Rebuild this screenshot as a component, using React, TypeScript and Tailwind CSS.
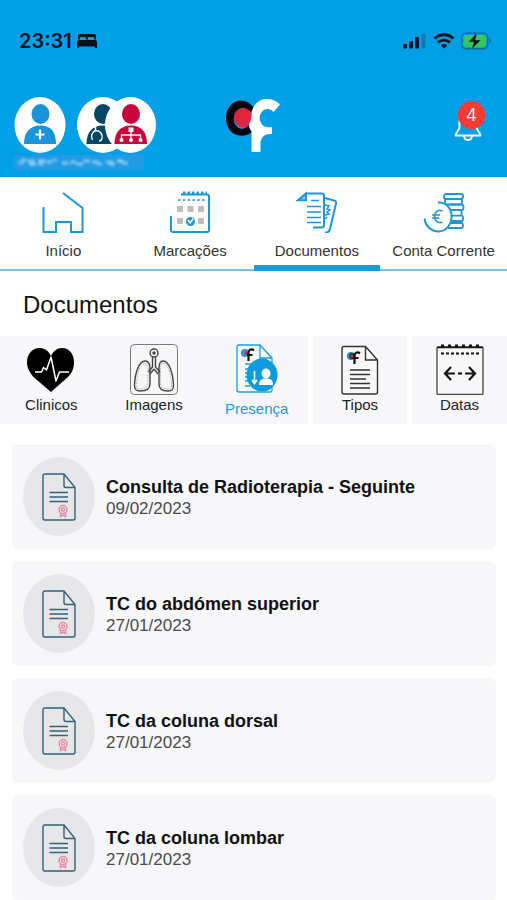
import clsx from "clsx";
import type { ReactNode } from "react";
import { useState } from "react";

// ── Data ──────────────────────────────────────────────

const DOCUMENTS = [
  { title: "Consulta de Radioterapia - Seguinte", date: "09/02/2023" },
  { title: "TC do abdómen superior", date: "27/01/2023" },
  { title: "TC da coluna dorsal", date: "27/01/2023" },
  { title: "TC da coluna lombar", date: "27/01/2023" },
];

/** Lit cells of the masked patient name: x, y, width, opacity. */
const MASK_CELLS = [
  [4, 6, 6, 0.4], [7, 3, 5, 0.5], [13, 4, 8, 0.5], [15, 7, 7, 0.6],
  [24, 4, 7, 0.6], [24, 7, 6, 0.5], [32, 5, 6, 0.5], [38, 3, 5, 0.4],
  [48, 6, 6, 0.5], [56, 5, 6, 0.5], [62, 7, 7, 0.5], [69, 4, 7, 0.5],
  [78, 5, 6, 0.5], [83, 7, 5, 0.5], [92, 5, 7, 0.5], [95, 7, 6, 0.5],
  [103, 4, 6, 0.6], [108, 6, 6, 0.5],
];

// ── Status bar icons ──────────────────────────────────

function BedIcon() {
  return (
    <svg width="22" height="16" viewBox="0 0 22 16" fill="#05131c">
      <path d="M2 6.500V3a2 2 0 0 1 2-2h14a2 2 0 0 1 2 2v3.500h-2V5a1 1 0 0 0-1-1h-4a1 1 0 0 0-1 1v1.500h-2V5a1 1 0 0 0-1-1H5a1 1 0 0 0-1 1v1.500z" />
      <path d="M3 7h16a2 2 0 0 1 2 2v6h-2v-1.500H3V15H1V9a2 2 0 0 1 2-2z" />
    </svg>
  );
}

function SignalIcon() {
  return (
    <svg width="24" height="16" viewBox="0 0 24 16" fill="#05131c">
      <rect x="0" y="11" width="4" height="4.500" rx="1" />
      <rect x="6" y="8" width="4" height="7.500" rx="1" />
      <rect x="12" y="4" width="4" height="11.500" rx="1" />
      <rect x="18.500" y="0.500" width="4" height="15" rx="1" opacity="0.250" />
    </svg>
  );
}

function WifiIcon() {
  return (
    <svg width="22" height="16" viewBox="0 0 22 16" fill="none" stroke="#05131c" strokeWidth="2.800">
      <path d="M1.500 5.600a13.600 13.600 0 0 1 19 0" />
      <path d="M5 9.600a8.600 8.600 0 0 1 12 0" />
      <path d="M11 15.600 7.800 12.400a4.600 4.600 0 0 1 6.400 0z" fill="#05131c" stroke="none" />
    </svg>
  );
}

function BatteryIcon() {
  return (
    <svg width="32" height="18" viewBox="0 0 32 18">
      <rect x="0.700" y="1.200" width="26" height="15.600" rx="4" fill="none" stroke="#0a6f9c" strokeWidth="1.400" />
      <rect x="2.500" y="3" width="22.500" height="12" rx="2.400" fill="#35c85f" />
      <path d="M28.500 6.500c2 .6 2 4.400 0 5z" fill="#0a6f9c" />
      <path d="M16 .5 7.500 10h5.200L10.500 17.500 20 8h-5.400z" fill="#05131c" stroke="#35c85f" strokeWidth="0.500" />
    </svg>
  );
}

// ── Header icons ──────────────────────────────────────

function PatientIcon() {
  return (
    <svg width="52" height="56" viewBox="0 0 52 56">
      <ellipse cx="26" cy="28" rx="25.500" ry="28" fill="#fff" />
      <ellipse cx="26.500" cy="17" rx="9" ry="10" fill="#1a94d8" />
      <path d="M10 47c0-12 6-18.500 16.500-18.500S42 35 42 47z" fill="#1a94d8" />
      <path d="M26 32.500v10M21.500 37.500h9" stroke="#fff" strokeWidth="2.200" />
    </svg>
  );
}

function CareTeamIcon() {
  return (
    <svg width="80" height="56" viewBox="0 0 80 56">
      <ellipse cx="26" cy="28" rx="26" ry="28" fill="#fff" />
      <ellipse cx="26" cy="17" rx="9" ry="10" fill="#074564" />
      <path d="M9.500 47c0-12 6-18.500 16.500-18.500S42.500 35 42.500 47z" fill="#074564" />
      <path
        d="M18.500 29v4.500c-4 2-5 6-3 9.500M18.500 33.500c5 0 7.500 4 6.500 8-.500 2-1.500 2.500-3 2.500M29 29c0 4 3 6 2 9"
        fill="none"
        stroke="#fff"
        strokeWidth="1.400"
      />
      <ellipse cx="53.500" cy="28" rx="25.500" ry="28" fill="#fff" />
      <ellipse cx="54" cy="17" rx="9" ry="10" fill="#c8053c" />
      <path d="M37.500 47c0-12 6-18.500 16.500-18.500S70 35 70 47z" fill="#c8053c" />
      <path d="M54 32v11M44.500 42v-4h19v4" fill="none" stroke="#fff" strokeWidth="1.300" />
      <rect x="51.500" y="30.500" width="5" height="4.500" fill="#fff" />
      <circle cx="44.500" cy="43" r="2" fill="#fff" />
      <circle cx="54" cy="43" r="2" fill="#fff" />
      <circle cx="63.500" cy="43" r="2" fill="#fff" />
    </svg>
  );
}

function NameMask() {
  return (
    <svg width="130" height="15" viewBox="0 0 130 15">
      <rect width="130" height="15" fill="#229be5" />
      <g fill="#b9dffa" className="blur-[1px]">
        {MASK_CELLS.map(([x, y, w, o]) => (
          <rect key={`${x}-${y}`} x={x} y={y} width={w} height="4" opacity={o} />
        ))}
      </g>
    </svg>
  );
}

function ClinicLogo() {
  return (
    <svg width="56" height="54" viewBox="0 0 56 54">
      <path
        d="M28 9.500C24 2.500 16 0 10 2.500 3 5.500 0 12 0 19c0 8 4 15 11 17 6.500 2 13 0 17.500-5.500L23 26c-3 4-8 5-11.500 2-5-4-5-12 0-16 4-3 8-2 11.500 2.500z"
        fill="#030608"
      />
      <ellipse cx="17" cy="18.500" rx="9" ry="9.800" fill="#e0263f" />
      <path
        d="M25.500 53V32c-2-2-3-5-2-8 1.500-3 2-5 2-8C26 6 33 0 40 0c6 0 11 2 14 5.500L47.500 13c-2.500-3-6.500-4-9.500-2-4 2.500-5.500 7.500-3.500 12 2 4.500 5.500 6 11.500 5v7h-2c-6 0-9.500 4-9.500 10V53z"
        fill="#fff"
      />
    </svg>
  );
}

function BellIcon() {
  return (
    <svg width="28" height="32" viewBox="0 0 28 32" fill="none" stroke="#fff" strokeWidth="2" strokeLinejoin="round">
      <path d="M14 3c-6 0-8.500 4.500-8.500 10v5c0 3-3 4.500-4 8.500h25c-1-4-4-5.500-4-8.500v-5C22.500 7.500 20 3 14 3z" />
      <path d="M10 27c.500 5.300 7.500 5.300 8 0" />
    </svg>
  );
}

// ── Navigation icons ──────────────────────────────────

function HomeIcon() {
  return (
    <svg width="42" height="42" viewBox="0 0 42 42" fill="none" stroke="#1d97d7" strokeWidth="2">
      <path d="M1.500 16v25H14V31h15v10h11.500V17L21 2" />
    </svg>
  );
}

function CalendarIcon() {
  return (
    <svg width="42" height="42" viewBox="0 0 42 42" fill="none" stroke="#1d97d7" strokeWidth="2">
      <path d="M12 3.500h26q2 0 2 2V39q0 2-2 2H4q-2 0-2-2V25" />
      <path d="M14 2h24" strokeWidth="3" strokeDasharray="2.500 2" />
      <path d="M9 9h27" strokeWidth="1.500" strokeDasharray="2.500 2.300" />
      <g fill="#bdbdbd" stroke="none">
        <rect x="8" y="15" width="6" height="6" rx="1" />
        <rect x="18.500" y="15" width="6" height="6" rx="1" />
        <rect x="29" y="15" width="6" height="6" rx="1" />
        <rect x="8" y="27" width="6" height="6" rx="1" />
        <rect x="29" y="27" width="6" height="6" rx="1" />
      </g>
      <circle cx="21.500" cy="30.500" r="4.500" fill="#1d97d7" stroke="none" />
      <path d="m19 29 2.200 3 3-4.500" stroke="#fff" strokeWidth="1.500" />
    </svg>
  );
}

function DocumentsIcon() {
  return (
    <svg width="42" height="42" viewBox="0 0 42 42" fill="none" stroke="#1d97d7" strokeWidth="2">
      <path d="M10 2.500h16q2 0 2 2V34q0 2.500-2.500 2.500H17" />
      <path d="M10 2.500v6.700H2z" fill="#1d97d7" fillOpacity="0.500" />
      <path d="M15 9.500h8M11 15.500h14M11 21h14M11 26.500h14M11 31.500h14" strokeWidth="1.600" />
      <path d="m29 7 9 2.500q2.500.500 2 3L34 38q-1 4-5 3.500" />
      <path d="m29 14 4 1-2 3 3 1-3 2 2 2-4 1M29 28l2-2" strokeWidth="1.500" />
    </svg>
  );
}

function CoinsIcon() {
  return (
    <svg width="42" height="42" viewBox="0 0 42 42" fill="none" stroke="#1d97d7" strokeWidth="1.800">
      <rect x="21" y="3" width="19" height="5" rx="2" />
      <rect x="22" y="8" width="17" height="5.500" rx="1.500" />
      <path d="M26 13.500h13q1.500 0 1.500 2.800T39 19H28M28 19h10.500v5.700H29M29 24.700h9.500q1.500 0 1.500 2.800T38.500 30H29M29 30h8.500v2H28M28 32h10.500q1.500 0 1.500 2.500T38.500 37H25" />
      <path d="M15 11.500c8-.500 13.500 5.500 13.500 14S23 40.500 15.500 40.500 2.500 35 1.500 27.500" strokeWidth="2" />
      <path d="M19.500 20c-4.500-2-8 1-8 5.500s3.500 7.500 8 5.500M9 24h8M9 27h7.500" strokeWidth="1.500" />
    </svg>
  );
}

// ── Filter icons ──────────────────────────────────────

function HeartIcon() {
  return (
    <svg width="48" height="51" viewBox="0 0 48 51">
      <path
        d="M24 12C21 6 17 4 12.500 4 5.500 4 0 10 0 18c0 6 2.500 10 6.500 15L24 48l17-15c4.500-5 6-9 6-15 0-8-5-14-12-14-5 0-8.500 3-11 8z"
        fill="#000"
      />
      <path
        d="M8 28h6.500l2-4.500 3 2.500L24 13l5 24 3.500-9H42"
        fill="none"
        stroke="#fff"
        strokeWidth="1.500"
        strokeLinejoin="round"
      />
    </svg>
  );
}

function LungsIcon() {
  return (
    <svg width="48" height="51" viewBox="0 0 48 51" fill="none" stroke="#444" strokeWidth="1.400">
      <rect x="0.500" y="0.500" width="47" height="50" rx="4" stroke="#777" strokeWidth="1" />
      <circle cx="24" cy="9" r="4" />
      <circle cx="24" cy="9" r="1" fill="#222" />
      <path d="M22.500 13v10L18 28M25.500 13v10l4.500 5M24 25l-4 5M24 25l4 5" />
      <path d="M15 17c3 0 5 3 5 8v15c0 5-4 7-10 7-4 0-5.500-1.500-5.500-6C5 29 9 17 15 17z" />
      <path d="M33 17c-3 0-4 3-4 8v15c0 5 4 7 9 7 4 0 5.500-1.500 5.500-6C43 29 39 17 33 17z" />
      <path
        d="M15 19.500c2 0 3 2 3 6V40c0 3.500-4 5-8 5-3 0-3.500-1-3.500-4C7 30 10 19.500 15 19.500zM33 19.500c-2 0-2.500 2-2.500 6V40c0 3.500 4 5 7.500 5 3 0 3.500-1 3.500-4C41 30 38 19.500 33 19.500z"
        stroke="#aaa"
        strokeWidth="0.800"
        strokeDasharray="2 1"
      />
    </svg>
  );
}

/** Small clinic mark stamped on the document icons. */
function LogoStamp() {
  return (
    <g fill="none">
      <circle cx="4" cy="5" r="3" stroke="#2d8fc6" strokeWidth="2.200" />
      <circle cx="5" cy="5" r="2.200" fill="#e0263f" />
      <path d="M13 2.200C10 .5 7.500 2 7.500 5v8M6 7h5.500" stroke="#111" strokeWidth="2.200" />
    </g>
  );
}

function PresenceIcon() {
  return (
    <svg width="42" height="51" viewBox="0 0 42 51" fill="none" stroke="#1a9ddd" strokeWidth="1.300">
      <path d="M24 1H3Q1 1 1 3v43q0 2 2 2h31q2 0 2-2V14zM24 1v13h12" />
      <path d="M9 20h16M9 25h6M9 29h4M9 33h3M9 37h3M9 42h5" />
      <g transform="translate(5 4)">
        <LogoStamp />
      </g>
      <ellipse cx="26" cy="31" rx="15.500" ry="16.500" fill="#0d9bdd" stroke="none" />
      <path d="M18.500 27v12M16 36l2.500 3.500L21 36" stroke="#fff" strokeWidth="1.600" />
      <g fill="#fff" stroke="none">
        <ellipse cx="30" cy="29.500" rx="4.500" ry="5" />
        <path d="M23 41c0-4 2-6 5-6.500h4c3.500.500 5 2.500 5 6.500z" />
      </g>
    </svg>
  );
}

function TypesIcon() {
  return (
    <svg width="38" height="51" viewBox="0 0 38 51" fill="none" stroke="#333" strokeWidth="1.400">
      <path d="M24.500 2.500H3q-2 0-2 2V48q0 2 2 2h31.500q2 0 2-2V16zM24.500 2.500V16h12" />
      <path d="M9 26h20M9 30.500h20M9 35h16M9 39.500h20M9 44h20" />
      <g transform="translate(6 7)">
        <LogoStamp />
      </g>
    </svg>
  );
}

function DatesIcon() {
  return (
    <svg width="48" height="51" viewBox="0 0 48 51" fill="none" stroke="#111">
      <rect x="1" y="3" width="46" height="47.500" rx="1" stroke="#444" strokeWidth="1.300" />
      <path d="M5 2h40" strokeWidth="3" strokeDasharray="3 4" />
      <path d="M1 3.500h46" strokeWidth="1.600" />
      <path d="M5 9.500h40" strokeWidth="1.800" strokeDasharray="3 2" />
      <path d="m15 23-6 6.500 6 6.500M33 23l6 6.500-6 6.500M9 29.500h10M29 29.500h10" strokeWidth="2.200" />
      <path d="M22 29.500h4" strokeWidth="2.200" />
    </svg>
  );
}

// ── Document card icon ────────────────────────────────

function CertificateIcon() {
  return (
    <svg width="34" height="48" viewBox="0 0 34 48" fill="none" stroke="#31617b" strokeWidth="1.400">
      <path d="M22 1H3Q1 1 1 3v42q0 2 2 2h28q2 0 2-2V14.500zM22 1v11.500q0 2 2 2h9" />
      <path d="M7.500 19.500H26M7.500 24H26M7.500 28.500H26" />
      <g stroke="#e58ba3" strokeWidth="1.500">
        <circle cx="21" cy="36.500" r="4" />
        <circle cx="21" cy="36.500" r="1.600" />
        <path d="M18.500 40v3.500l2.500-1.500 2.500 1.500V40" />
      </g>
    </svg>
  );
}

// ── Building blocks ───────────────────────────────────

function NavButton({
  label,
  icon,
  active,
  onClick,
}: {
  label: string;
  icon: ReactNode;
  active: boolean;
  onClick: () => void;
}) {
  return (
    <button
      type="button"
      onClick={onClick}
      aria-current={active ? "page" : undefined}
      className={clsx(
        "flex flex-col items-center gap-2 pt-[14px] text-[15px] leading-5 whitespace-nowrap text-[#333]",
        active ? "border-b-[6px] border-[#159ddd]" : "border-b-2 border-[#7cc2e8]",
      )}
    >
      {icon}
      <span>{label}</span>
    </button>
  );
}

function FilterButton({
  label,
  icon,
  active = false,
  onClick,
}: {
  label: string;
  icon: ReactNode;
  active?: boolean;
  onClick: () => void;
}) {
  return (
    <button
      type="button"
      onClick={onClick}
      aria-pressed={active}
      className={clsx(
        "flex flex-1 flex-col items-center pt-2 text-[15px] leading-5",
        active ? "gap-1 text-[#1b9bdb]" : "text-[#222]",
      )}
    >
      {icon}
      <span>{label}</span>
    </button>
  );
}

function DocumentCard({ title, date }: { title: string; date: string }) {
  return (
    <li>
      <button
        type="button"
        className="flex w-full items-center gap-[11px] rounded-md bg-[#f7f7f9] px-[11px] py-[13px] text-left"
      >
        <span className="flex h-[79px] w-[72px] shrink-0 items-center justify-center rounded-[50%] bg-[#e7e7e9]">
          <CertificateIcon />
        </span>
        <span className="flex flex-col pt-0.5 leading-[22px]">
          <span className="text-lg leading-[22px] font-bold text-[#111]">{title}</span>
          <span className="text-[17px] text-[#4a4a4a]">{date}</span>
        </span>
      </button>
    </li>
  );
}

// ── Screen ────────────────────────────────────────────

export default function App() {
  const [section, setSection] = useState("Documentos");
  const [filter, setFilter] = useState("Presença");

  const sections = [
    { label: "Início", icon: <HomeIcon /> },
    { label: "Marcações", icon: <CalendarIcon /> },
    { label: "Documentos", icon: <DocumentsIcon /> },
    { label: "Conta Corrente", icon: <CoinsIcon /> },
  ];

  const filterGroups = [
    [
      { label: "Clinicos", icon: <HeartIcon /> },
      { label: "Imagens", icon: <LungsIcon /> },
      { label: "Presença", icon: <PresenceIcon /> },
    ],
    [{ label: "Tipos", icon: <TypesIcon /> }],
    [{ label: "Datas", icon: <DatesIcon /> }],
  ];

  return (
    <div className="min-h-screen bg-white font-['Liberation_Sans',Arial,sans-serif]">
      <header className="bg-[#009fe6] pb-[7px]">
        {/* Phone status bar */}
        <div className="flex items-center justify-between pt-7 pr-[14px] pl-[19px]">
          <div className="flex items-center gap-1">
            <span className="font-['Inter',sans-serif] text-xl leading-[26px] font-semibold text-[#05131c]">
              23:31
            </span>
            <BedIcon />
          </div>
          <div className="flex items-center gap-1.5">
            <SignalIcon />
            <WifiIcon />
            <BatteryIcon />
          </div>
        </div>

        {/* Profiles, logo, notifications */}
        <div className="grid grid-cols-[1fr_auto_1fr] items-start pt-[43px] pr-[21px] pl-[14px]">
          <div>
            <div className="flex gap-[11px]">
              <button type="button" aria-label="Utente">
                <PatientIcon />
              </button>
              <button type="button" aria-label="Equipa clínica">
                <CareTeamIcon />
              </button>
            </div>
            <div className="pt-0.5">
              <NameMask />
            </div>
          </div>
          <div className="pt-0.5 pl-2">
            <ClinicLogo />
          </div>
          <button type="button" aria-label="Notificações" className="relative mt-3 mr-1 justify-self-end">
            <BellIcon />
            <span className="absolute -top-2 left-1 flex h-[28px] w-[27px] items-center justify-center rounded-full bg-[#fb3b30] text-lg text-white">
              4
            </span>
          </button>
        </div>
      </header>

      <nav className="grid h-[94px] grid-cols-4">
        {sections.map(({ label, icon }) => (
          <NavButton
            key={label}
            label={label}
            icon={icon}
            active={section === label}
            onClick={() => setSection(label)}
          />
        ))}
      </nav>

      <main>
        <h1 className="px-[23px] pt-[18px] pb-[15px] text-2xl leading-8 text-[#111]">Documentos</h1>

        <div className="grid h-[88px] grid-cols-[308fr_94fr_95fr] gap-[5px]">
          {filterGroups.map((group) => (
            <div key={group[0].label} className="flex bg-[#f7f7f9]">
              {group.map(({ label, icon }) => (
                <FilterButton
                  key={label}
                  label={label}
                  icon={icon}
                  active={filter === label}
                  onClick={() => setFilter(label)}
                />
              ))}
            </div>
          ))}
        </div>

        <ul className="flex flex-col gap-3 pt-5 pr-[11px] pl-3">
          {DOCUMENTS.map((doc) => (
            <DocumentCard key={doc.title} title={doc.title} date={doc.date} />
          ))}
        </ul>
      </main>
    </div>
  );
}
